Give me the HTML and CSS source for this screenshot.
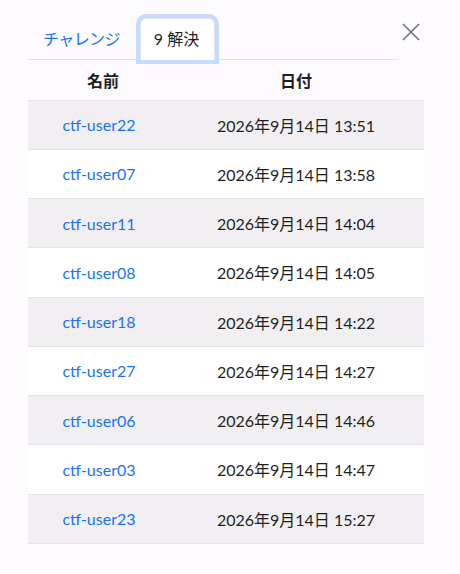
FILE: index.html
```html
<!DOCTYPE html>
<html>
<head>
    <meta charset="UTF-8">
    <title>解決</title>
    <link rel="stylesheet" href="styles.css">
</head>
<body>
    <div class="modal">
        <div class="modal-header">
            <ul class="tabs">
                <li><a class="tab-link" href="#">チャレンジ</a></li>
                <li><a class="tab-link active" href="#">9 解決</a></li>
            </ul>
            <button class="close-button" aria-label="閉じる">
                <svg width="18" height="18" viewBox="0 0 18 18">
                    <path d="M1 1 L17 17 M17 1 L1 17" stroke="#737373" stroke-width="1.6" fill="none"/>
                </svg>
            </button>
        </div>

        <table class="solves">
            <thead>
                <tr>
                    <th class="col-name">名前</th>
                    <th class="col-date">日付</th>
                </tr>
            </thead>
            <tbody>
                <tr><td><a href="#">ctf-user22</a></td><td>2026年9月14日 13:51</td></tr>
                <tr><td><a href="#">ctf-user07</a></td><td>2026年9月14日 13:58</td></tr>
                <tr><td><a href="#">ctf-user11</a></td><td>2026年9月14日 14:04</td></tr>
                <tr><td><a href="#">ctf-user08</a></td><td>2026年9月14日 14:05</td></tr>
                <tr><td><a href="#">ctf-user18</a></td><td>2026年9月14日 14:22</td></tr>
                <tr><td><a href="#">ctf-user27</a></td><td>2026年9月14日 14:27</td></tr>
                <tr><td><a href="#">ctf-user06</a></td><td>2026年9月14日 14:46</td></tr>
                <tr><td><a href="#">ctf-user03</a></td><td>2026年9月14日 14:47</td></tr>
                <tr><td><a href="#">ctf-user23</a></td><td>2026年9月14日 15:27</td></tr>
            </tbody>
        </table>
    </div>
</body>
</html>
```

FILE: styles.css
```css
:root {
    --page-font: Lato, "Noto Sans CJK JP", sans-serif;
}

* {
    margin: 0;
    padding: 0;
    box-sizing: border-box;
}

body {
    width: 460px;
    height: 574px;
    font-family: var(--page-font);
    font-size: 16px;
    background-color: #fdfbfe;
    color: #1f1f1f;
}

.modal {
    padding: 18px 36px 0 28px;
}

.modal-header {
    display: flex;
    align-items: flex-start;
    justify-content: space-between;
}

/* タブ */
.tabs {
    list-style: none;
    display: flex;
    width: 372px;
    border-bottom: 1px solid #e4e2e6;
}

.tab-link {
    display: block;
    padding: 8px 18px 8px 14px;
    line-height: 24px;
    letter-spacing: -0.6px;
    color: #1a73f0;
    text-decoration: none;
    border: 1px solid transparent;
    border-radius: 6px 6px 0 0;
    margin-bottom: -1px;
}

.tab-link.active {
    color: #1f1f1f;
    background: #fff;
    letter-spacing: 0;
    border-color: #e4e2e6 #e4e2e6 #fff;
    box-shadow: 0 0 0 4px #c6dcfb;
    margin-left: 1px;
    padding: 8px 15px 8px 13px;
}

.close-button {
    background: none;
    border: none;
    padding: 3px;
    margin-top: 2px;
    margin-right: 1px;
    cursor: pointer;
}

/* 解決一覧 */
.solves {
    width: 396px;
    border-collapse: collapse;
}

.solves th {
    height: 40px;
    font-weight: 700;
    text-align: center;
    border-bottom: 1px solid #e4e2e6;
}

.solves td {
    height: 49.25px;
    text-align: center;
    border-bottom: 1px solid #e4e2e6;
}

.col-name {
    width: 150px;
}

.solves td:first-child {
    padding-right: 8px;
}

.solves th.col-date,
.solves td:last-child {
    padding-right: 10px;
}

.solves tbody tr:nth-child(odd) {
    background: #f1eff2;
}

.solves tbody tr:nth-child(even) {
    background: #fff;
}

.solves a {
    color: #1a73f0;
    text-decoration: none;
}
```
